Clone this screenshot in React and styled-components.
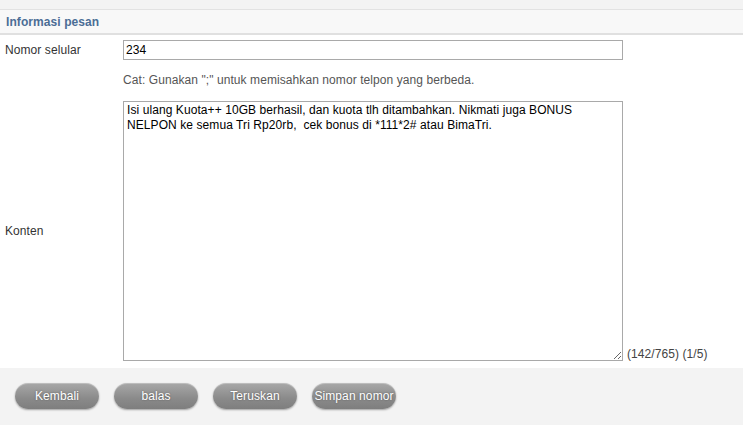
import React from 'react';
import styled, { createGlobalStyle } from 'styled-components';

const GlobalStyle = createGlobalStyle`
  html, body {
    margin: 0;
    padding: 0;
    background: #fff;
    font-family: "Liberation Sans", Arial, sans-serif;
    font-size: 12px;
    letter-spacing: 0.08px;
    color: #333;
  }
`;

const Page = styled.div`
  width: 743px;
  height: 425px;
  display: flex;
  flex-direction: column;
  overflow: hidden;
`;

const TopStrip = styled.div`
  height: 9px;
  background: #f3f3f3;
  border-bottom: 1px solid #e2e2e2;
`;

const Header = styled.div`
  height: 23px;
  display: flex;
  align-items: center;
  padding-left: 6px;
  background: #f8f8f8;
  border-bottom: 2px solid #e0e0e0;
  color: #4b6d95;
  font-weight: bold;
  font-size: 12px;
`;

const Form = styled.div`
  display: grid;
  grid-template-columns: 123px 500px 1fr;
  padding-top: 5px;
`;

const Label = styled.div`
  padding-left: 5px;
  display: flex;
  align-items: ${p => (p.$center ? 'center' : 'flex-start')};
  color: #333;
`;

const Input = styled.input`
  box-sizing: border-box;
  width: 500px;
  height: 20px;
  margin: 0;
  padding: 0 2px;
  border: 1px solid #a9a9a9;
  font-family: "Liberation Sans", Arial, sans-serif;
  font-size: 12px;
  letter-spacing: 0.08px;
  color: #000;
  outline: none;
`;

const Note = styled.div`
  grid-column: 2 / 4;
  padding: 13px 0 14px;
  color: #555;
`;

const TextArea = styled.textarea`
  box-sizing: border-box;
  width: 500px;
  height: 260px;
  margin: 0;
  padding: 1px 12px 2px 3px;
  border: 1px solid #a9a9a9;
  font-family: "Liberation Sans", Arial, sans-serif;
  font-size: 12px;
  letter-spacing: 0.08px;
  line-height: 15px;
  color: #000;
  resize: both;
  outline: none;
`;

const Counter = styled.div`
  display: flex;
  align-items: flex-end;
  padding-left: 4px;
  color: #444;
  white-space: nowrap;
`;

const Footer = styled.div`
  flex: 1;
  margin-top: 7px;
  background: #f3f3f3;
  display: flex;
  align-items: flex-start;
  gap: 15px;
  padding: 15px 0 0 15px;
`;

const Button = styled.button`
  width: 84px;
  height: 26px;
  border: none;
  border-radius: 13px;
  background: linear-gradient(#a8a8a8, #8a8a8a 60%, #7e7e7e);
  box-shadow: 0 1px 2px rgba(0, 0, 0, 0.35), inset 0 1px 0 rgba(255, 255, 255, 0.25);
  color: #fff;
  font-family: "Liberation Sans", Arial, sans-serif;
  font-size: 12px;
  letter-spacing: 0.1px;
  text-shadow: 0 0 2px rgba(0, 0, 0, 0.4);
  padding: 0;
  white-space: nowrap;
  cursor: pointer;
`;

const message =
  'Isi ulang Kuota++ 10GB berhasil, dan kuota tlh ditambahkan. Nikmati juga BONUS NELPON ke semua Tri Rp20rb,  cek bonus di *111*2# atau BimaTri.';

export default function App() {
  return (
    <Page>
      <GlobalStyle />
      <TopStrip />
      <Header>Informasi pesan</Header>
      <Form>
        <Label $center>Nomor selular</Label>
        <Input defaultValue="234" />
        <div />
        <div />
        <Note>Cat: Gunakan ";" untuk memisahkan nomor telpon yang berbeda.</Note>
        <Label $center>Konten</Label>
        <TextArea defaultValue={message} />
        <Counter>(142/765) (1/5)</Counter>
      </Form>
      <Footer>
        <Button>Kembali</Button>
        <Button>balas</Button>
        <Button>Teruskan</Button>
        <Button>Simpan nomor</Button>
      </Footer>
    </Page>
  );
}
